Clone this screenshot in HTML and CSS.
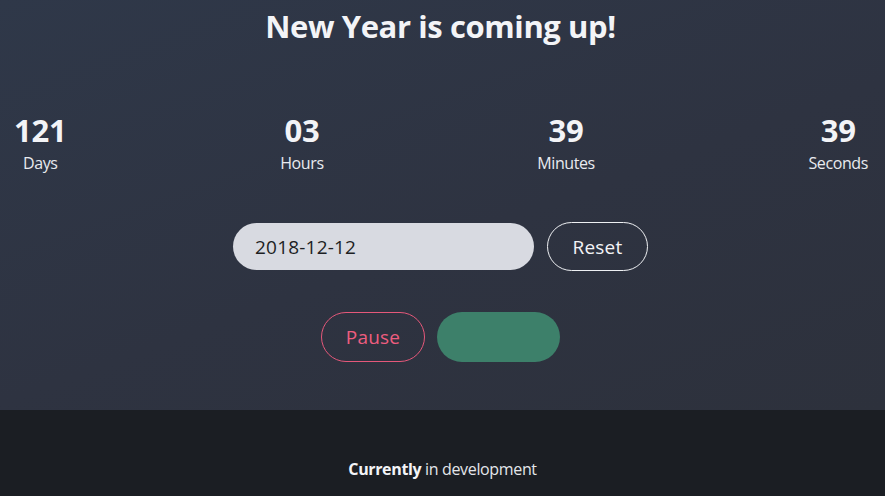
FILE: index.html
```html
<!DOCTYPE html>
<html lang="en">
<head>
<meta charset="utf-8">
<title>New Year Countdown</title>
<link rel="stylesheet" href="styles.css">
</head>
<body>
<main class="hero">
  <h1 class="title">New Year is coming up!</h1>
  <div class="countdown">
    <div class="unit"><span class="num">121</span><span class="label">Days</span></div>
    <div class="unit"><span class="num">03</span><span class="label">Hours</span></div>
    <div class="unit"><span class="num">39</span><span class="label">Minutes</span></div>
    <div class="unit"><span class="num">39</span><span class="label">Seconds</span></div>
  </div>
  <div class="date-row">
    <input class="date-input" type="text" value="2018-12-12">
    <button class="btn btn-outline">Reset</button>
  </div>
  <div class="action-row">
    <button class="btn btn-pause">Pause</button>
    <button class="btn btn-go"></button>
  </div>
</main>
<footer class="footer">
  <p class="footer-text"><strong>Currently</strong> in development</p>
</footer>
</body>
</html>
```
FILE: styles.css
```css
* { box-sizing: border-box; }
html, body { margin: 0; padding: 0; }
body {
  font-family: "Open Sans", "Noto Sans", sans-serif;
  color: #f3f4f7;
  background: #1b1e23;
}
.hero {
  height: 410px;
  padding-right: 4px;
  background: linear-gradient(160deg, #2f3849 0%, #2e3341 55%, #2d313c 100%);
  display: flex;
  flex-direction: column;
  align-items: center;
}
.title {
  margin: 5px 0 0;
  font-size: 31px;
  font-weight: 700;
  letter-spacing: -0.4px;
  line-height: 42px;
}
.countdown {
  align-self: stretch;
  display: flex;
  justify-content: space-between;
  padding: 0 13px 0 14px;
  margin-top: 65px;
}
.unit {
  display: flex;
  flex-direction: column;
  align-items: center;
}
.num {
  font-size: 31px;
  font-weight: 700;
  line-height: 36px;
  letter-spacing: -0.2px;
}
.label {
  margin-top: 5px;
  font-size: 16px;
  line-height: 20px;
  letter-spacing: -0.4px;
  color: #e8eaef;
}
.date-row {
  display: flex;
  align-items: center;
  gap: 13px;
  margin-top: 49px;
}
.date-input {
  width: 301px;
  height: 47px;
  border: none;
  border-radius: 24px;
  background: #d8dae1;
  font-family: "Open Sans", "Noto Sans", sans-serif;
  font-size: 19px;
  letter-spacing: 0.2px;
  color: #1d1f24;
  padding: 0 22px;
  outline: none;
}
.btn {
  height: 49px;
  border-radius: 25px;
  font-family: "Open Sans", "Noto Sans", sans-serif;
  font-size: 19px;
  letter-spacing: 0.2px;
  cursor: pointer;
}
.btn-outline {
  width: 101px;
  background: transparent;
  border: 1px solid #eef0f3;
  color: #f3f4f7;
}
.action-row {
  display: flex;
  gap: 12px;
  margin-top: 41px;
}
.btn-pause {
  width: 104px;
  height: 50px;
  background: transparent;
  border: 1px solid #e5587a;
  color: #ee5d7f;
}
.btn-go {
  width: 123px;
  height: 50px;
  border: none;
  background: #3d806a;
}
.footer {
  height: 86px;
  display: flex;
  justify-content: center;
  align-items: flex-end;
}
.footer-text {
  margin: 0 0 16px;
  font-size: 16px;
  letter-spacing: -0.35px;
  color: #e4e6ea;
  font-weight: 400;
}
.footer-text strong { font-weight: 700; color: #f3f4f7; }
```
